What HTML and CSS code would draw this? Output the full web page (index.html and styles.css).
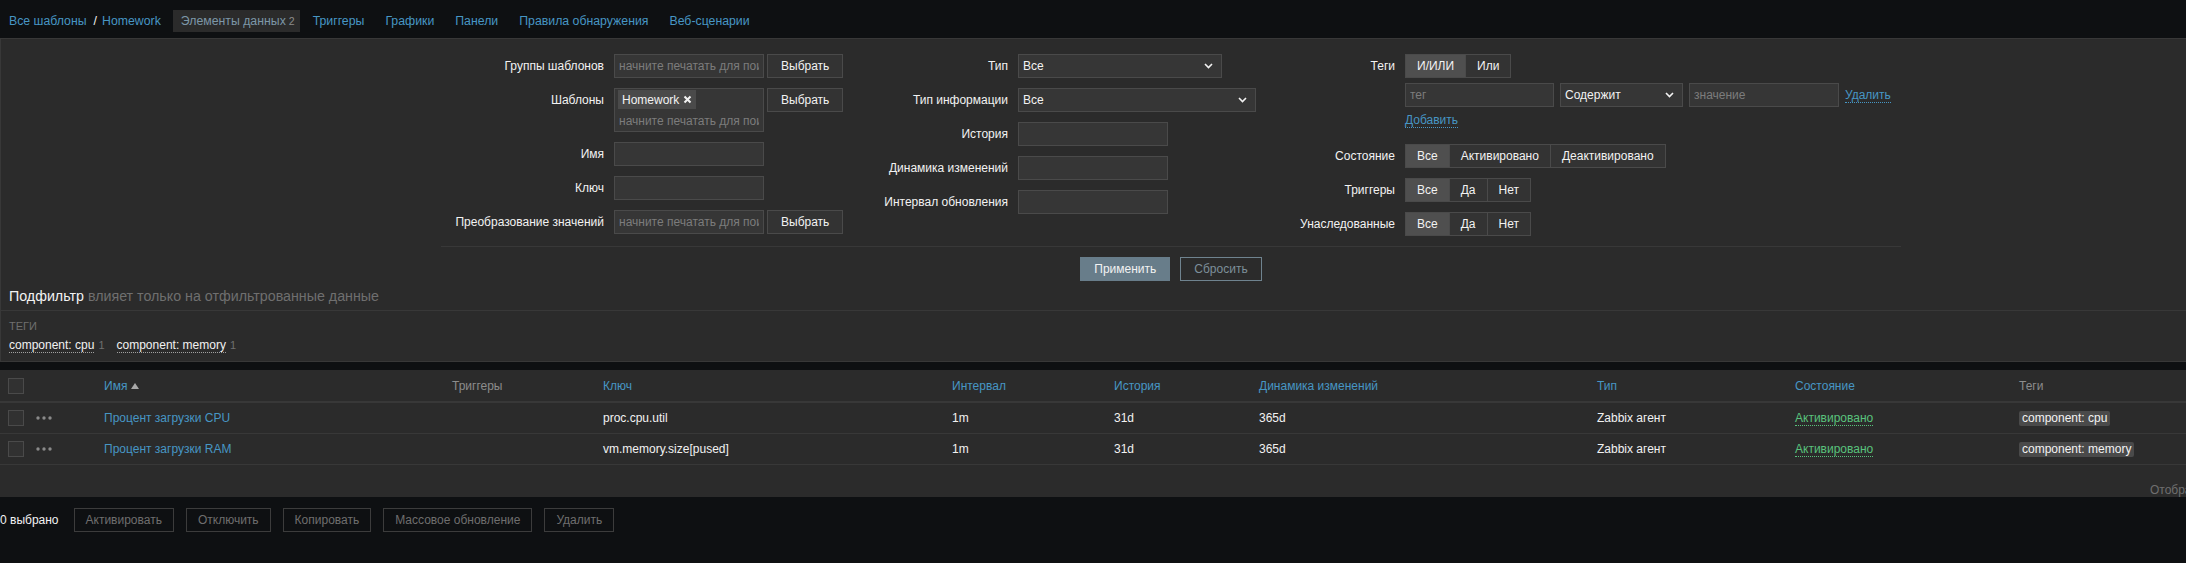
FILE: index.html
```html
<!DOCTYPE html>
<html lang="ru">
<head>
<meta charset="utf-8">
<title>Элементы данных</title>
<link rel="stylesheet" href="styles.css">
</head>
<body>
<div class="page">
  <nav class="topnav">
    <div class="crumbs"><a class="link">Все шаблоны</a><span class="sep">/</span><a class="link">Homework</a></div>
    <ul class="tabs">
      <li class="tab active">Элементы данных<span class="count">2</span></li>
      <li class="tab"><a class="link">Триггеры</a></li>
      <li class="tab"><a class="link">Графики</a></li>
      <li class="tab"><a class="link">Панели</a></li>
      <li class="tab"><a class="link">Правила обнаружения</a></li>
      <li class="tab"><a class="link">Веб-сценарии</a></li>
    </ul>
  </nav>

  <section class="filter">
    <form class="filter-form">
      <div class="filter-cols">
        <div class="fcol fcol-1">
          <label class="flabel">Группы шаблонов</label>
          <div class="with-btn"><input class="input" placeholder="начните печатать для поиска"><button type="button" class="btn grey">Выбрать</button></div>

          <label class="flabel">Шаблоны</label>
          <div class="with-btn">
            <div class="multiselect">
              <span class="chip">Homework<svg class="chip-x" width="9" height="9" viewBox="0 0 9 9"><path d="M1.5 1.5 L7.5 7.5 M7.5 1.5 L1.5 7.5" stroke="#f2f2f2" stroke-width="2"/></svg></span>
              <input class="ms-input" placeholder="начните печатать для поиска">
            </div>
            <button type="button" class="btn grey">Выбрать</button>
          </div>

          <label class="flabel">Имя</label>
          <div><input class="input"></div>

          <label class="flabel">Ключ</label>
          <div><input class="input"></div>

          <label class="flabel">Преобразование значений</label>
          <div class="with-btn"><input class="input" placeholder="начните печатать для поиска"><button type="button" class="btn grey">Выбрать</button></div>
        </div>

        <div class="fcol fcol-2">
          <label class="flabel">Тип</label>
          <div><div class="select w204"><span>Все</span><svg class="chev" width="9" height="6" viewBox="0 0 9 6"><path d="M1 1 L4.5 4.5 L8 1" fill="none" stroke="#f2f2f2" stroke-width="1.6"/></svg></div></div>

          <label class="flabel">Тип информации</label>
          <div><div class="select w238"><span>Все</span><svg class="chev" width="9" height="6" viewBox="0 0 9 6"><path d="M1 1 L4.5 4.5 L8 1" fill="none" stroke="#f2f2f2" stroke-width="1.6"/></svg></div></div>

          <label class="flabel">История</label>
          <div><input class="input"></div>

          <label class="flabel">Динамика изменений</label>
          <div><input class="input"></div>

          <label class="flabel">Интервал обновления</label>
          <div><input class="input"></div>
        </div>

        <div class="fcol fcol-3">
          <label class="flabel">Теги</label>
          <div class="tags-field">
            <div class="radio">
              <span class="seg on">И/ИЛИ</span><span class="seg">Или</span>
            </div>
            <div class="tag-row">
              <input class="input w149" placeholder="тег">
              <div class="select w123"><span>Содержит</span><svg class="chev" width="9" height="6" viewBox="0 0 9 6"><path d="M1 1 L4.5 4.5 L8 1" fill="none" stroke="#f2f2f2" stroke-width="1.6"/></svg></div>
              <input class="input" placeholder="значение">
              <a class="link dotted">Удалить</a>
            </div>
            <div class="add-row"><a class="link dotted">Добавить</a></div>
          </div>

          <label class="flabel">Состояние</label>
          <div class="radio">
            <span class="seg on">Все</span><span class="seg">Активировано</span><span class="seg">Деактивировано</span>
          </div>

          <label class="flabel">Триггеры</label>
          <div class="radio">
            <span class="seg on">Все</span><span class="seg">Да</span><span class="seg">Нет</span>
          </div>

          <label class="flabel">Унаследованные</label>
          <div class="radio">
            <span class="seg on">Все</span><span class="seg">Да</span><span class="seg">Нет</span>
          </div>
        </div>
      </div>
      <div class="filter-buttons">
        <button type="button" class="btn primary">Применить</button>
        <button type="button" class="btn outline">Сбросить</button>
      </div>
    </form>

    <div class="subfilter">
      <div class="subfilter-head"><span class="sf-title">Подфильтр</span> <span class="sf-hint">влияет только на отфильтрованные данные</span></div>
      <div class="subfilter-body">
        <div class="sf-group">ТЕГИ</div>
        <div class="sf-tags">
          <span class="sf-tag"><a class="sf-link">component: cpu</a><sup class="sf-count">1</sup></span>
          <span class="sf-tag"><a class="sf-link">component: memory</a><sup class="sf-count">1</sup></span>
        </div>
      </div>
    </div>
  </section>

  <table class="list">
    <colgroup>
      <col class="c-check"><col class="c-act"><col class="c-name"><col class="c-trig"><col class="c-key"><col class="c-int"><col class="c-hist"><col class="c-trend"><col class="c-type"><col class="c-status"><col class="c-tags">
    </colgroup>
    <thead>
      <tr>
        <th><span class="checkbox"></span></th>
        <th></th>
        <th><a class="link">Имя</a><span class="arrow-up"></span></th>
        <th class="muted">Триггеры</th>
        <th><a class="link">Ключ</a></th>
        <th><a class="link">Интервал</a></th>
        <th><a class="link">История</a></th>
        <th><a class="link">Динамика изменений</a></th>
        <th><a class="link">Тип</a></th>
        <th><a class="link">Состояние</a></th>
        <th class="muted">Теги</th>
      </tr>
    </thead>
    <tbody>
      <tr>
        <td><span class="checkbox"></span></td>
        <td><svg class="dots" width="16" height="4" viewBox="0 0 16 4"><circle cx="2" cy="2" r="1.7" fill="#8a8a8a"/><circle cx="8" cy="2" r="1.7" fill="#8a8a8a"/><circle cx="14" cy="2" r="1.7" fill="#8a8a8a"/></svg></td>
        <td><a class="link">Процент загрузки CPU</a></td>
        <td></td>
        <td>proc.cpu.util</td>
        <td>1m</td>
        <td>31d</td>
        <td>365d</td>
        <td>Zabbix агент</td>
        <td><a class="green">Активировано</a></td>
        <td><span class="tag">component: cpu</span></td>
      </tr>
      <tr>
        <td><span class="checkbox"></span></td>
        <td><svg class="dots" width="16" height="4" viewBox="0 0 16 4"><circle cx="2" cy="2" r="1.7" fill="#8a8a8a"/><circle cx="8" cy="2" r="1.7" fill="#8a8a8a"/><circle cx="14" cy="2" r="1.7" fill="#8a8a8a"/></svg></td>
        <td><a class="link">Процент загрузки RAM</a></td>
        <td></td>
        <td>vm.memory.size[pused]</td>
        <td>1m</td>
        <td>31d</td>
        <td>365d</td>
        <td>Zabbix агент</td>
        <td><a class="green">Активировано</a></td>
        <td><span class="tag">component: memory</span></td>
      </tr>
    </tbody>
    <tfoot>
      <tr><td colspan="11" class="paging">Отображено 2 из 2 найденных</td></tr>
    </tfoot>
  </table>

  <div class="actions">
    <span class="selected-count">0 выбрано</span>
    <button type="button" class="btn disabled">Активировать</button>
    <button type="button" class="btn disabled">Отключить</button>
    <button type="button" class="btn disabled">Копировать</button>
    <button type="button" class="btn disabled">Массовое обновление</button>
    <button type="button" class="btn disabled">Удалить</button>
  </div>
</div>
</body>
</html>
```

FILE: styles.css
```css
html { overflow: hidden; }
body {
  margin: 0;
  background: #0e1012;
  color: #f2f2f2;
  font-family: "Liberation Sans", Arial, sans-serif;
  font-size: 12px;
}
.page { width: 2340px; }

.link { color: #4796c4; text-decoration: none; }
.dotted { border-bottom: 1px dotted #4796c4; }

/* top navigation */
.topnav {
  display: flex;
  align-items: flex-start;
  height: 38px;
  padding: 10px 0 0 9px;
  box-sizing: border-box;
  font-size: 12.3px;
}
.crumbs { display: flex; align-items: center; height: 22px; margin-right: 12px; }
.sep { margin: 0 5px 0 7px; color: #f2f2f2; }
.tabs { display: flex; gap: 5px; list-style: none; margin: 0; padding: 0; }
.tab { height: 22px; line-height: 22px; padding: 0 8px; }
.tab.active { background: #2b2b2b; color: #7d97a8; padding-right: 5px; }
.count { color: #8c8c8c; font-size: 10.5px; margin-left: 3px; }

/* filter */
.filter {
  background: #2b2b2b;
  border: 1px solid #383838;
  border-right: none;
}
.filter-form {
  width: 1460px;
  margin-left: 440px;
}
.filter-cols {
  display: flex;
  padding: 15px 0 10px;
}
.fcol {
  display: grid;
  column-gap: 10px;
  row-gap: 10px;
  align-items: start;
  align-content: start;
}
.fcol-1 { width: 430px; grid-template-columns: 163px 1fr; }
.fcol-2 { width: 400px; grid-template-columns: 137px 1fr; }
.fcol-3 { width: 630px; grid-template-columns: 124px 1fr; }
.flabel {
  text-align: right;
  line-height: 24px;
  white-space: nowrap;
}

.input {
  width: 150px;
  height: 24px;
  box-sizing: border-box;
  background: #363636;
  border: 1px solid #4a4a4a;
  color: #f2f2f2;
  font-family: inherit;
  font-size: 12px;
  padding: 0 4px;
  outline: none;
  display: block;
}
.input::placeholder, .ms-input::placeholder { color: #7c7c7c; }
.w149 { width: 149px; }
.with-btn { display: flex; gap: 3px; align-items: flex-start; }

.multiselect {
  width: 150px;
  height: 44px;
  box-sizing: border-box;
  background: #363636;
  border: 1px solid #4a4a4a;
  padding: 1px 3px 0;
}
.chip {
  display: inline-flex;
  align-items: center;
  gap: 4px;
  height: 19px;
  padding: 0 4px;
  background: #4a4a4a;
  color: #f2f2f2;
}
.chip-x { display: block; }
.ms-input {
  display: block;
  width: 100%;
  height: 20px;
  box-sizing: border-box;
  background: transparent;
  border: none;
  padding: 0 1px;
  margin-top: 2px;
  color: #f2f2f2;
  font-family: inherit;
  font-size: 12px;
  outline: none;
}

.select {
  display: flex;
  align-items: center;
  justify-content: space-between;
  height: 24px;
  box-sizing: border-box;
  background: #363636;
  border: 1px solid #4a4a4a;
  padding: 0 8px 0 4px;
}
.w204 { width: 204px; }
.w238 { width: 238px; }
.w123 { width: 123px; }

.btn {
  height: 24px;
  box-sizing: border-box;
  font-family: inherit;
  font-size: 12px;
  padding: 0 13px;
  border: 1px solid #4a4a4a;
  background: #383838;
  color: #f2f2f2;
  cursor: default;
}
.btn.grey { background: #333333; }
.btn.primary { background: #687d8a; border-color: #687d8a; color: #f2f2f2; }
.btn.outline { background: transparent; border-color: #6f838f; color: #7d8f9a; }
.btn.disabled {
  background: transparent;
  border-color: #3c3c3c;
  color: #6e6e6e;
  padding: 0 11px;
}

.radio { display: inline-flex; align-self: start; justify-self: start; border: 1px solid #4a4a4a; }
.seg {
  height: 22px;
  line-height: 22px;
  padding: 0 11px;
  background: #333333;
  border-left: 1px solid #4a4a4a;
}
.seg:first-child { border-left: none; }
.seg.on { background: #4f4f4f; }

.tags-field { display: flex; flex-direction: column; gap: 5px; padding-bottom: 6px; }
.tag-row { display: flex; align-items: center; gap: 6px; }
.add-row { line-height: 16px; }

.filter-buttons {
  display: flex;
  justify-content: center;
  gap: 10px;
  border-top: 1px solid #383838;
  padding-top: 10px;
}

/* subfilter */
.subfilter-head {
  padding: 7px 8px 6px;
  line-height: 16px;
  font-size: 14.25px;
  border-bottom: 1px solid #383838;
}
.sf-hint { color: #6f6f6f; }
.subfilter-body { padding: 8px 8px 7px; }
.sf-group { font-size: 11px; line-height: 15px; color: #6f6f6f; }
.sf-tags { margin-top: 2px; line-height: 18px; display: flex; gap: 12px; }
.sf-link { color: #f2f2f2; border-bottom: 1px dotted #a0a0a0; }
.sf-count { color: #6f6f6f; font-size: 11px; vertical-align: baseline; margin-left: 4px; }

/* list table */
.list {
  margin-top: 8px;
  width: 100%;
  background: #2b2b2b;
  border-collapse: collapse;
  table-layout: fixed;
}
.c-check { width: 28px; }
.c-act { width: 68px; }
.c-name { width: 348px; }
.c-trig { width: 151px; }
.c-key { width: 349px; }
.c-int { width: 162px; }
.c-hist { width: 145px; }
.c-trend { width: 338px; }
.c-type { width: 198px; }
.c-status { width: 224px; }
.c-tags { width: 329px; }
.list th {
  height: 31px;
  text-align: left;
  font-weight: normal;
  padding: 0 8px;
  border-bottom: 2px solid #383838;
  white-space: nowrap;
}
.list th.muted { color: #8c8c8c; }
.list td {
  height: 30px;
  padding: 0 8px;
  border-bottom: 1px solid #383838;
  white-space: nowrap;
}
.list th:first-child, .list td:first-child { padding: 0 0 0 8px; }
.checkbox {
  display: block;
  width: 16px;
  height: 16px;
  box-sizing: border-box;
  background: #313131;
  border: 1px solid #4a4a4a;
}
.dots { display: block; }
.arrow-up {
  display: inline-block;
  margin-left: 4px;
  width: 0;
  height: 0;
  border-left: 4px solid transparent;
  border-right: 4px solid transparent;
  border-bottom: 6px solid #a8a8a8;
  vertical-align: 1px;
}
.green { color: #59c27c; border-bottom: 1px dotted #59c27c; }
.tag {
  display: inline-block;
  background: #4a4a4a;
  padding: 0 3px;
  line-height: 15px;
  border-radius: 2px;
}
.list td.paging {
  height: 32px;
  border-bottom: none;
  text-align: right;
  vertical-align: bottom;
  padding: 0 20px 0 0;
  line-height: 14px;
  color: #6f6f6f;
}

/* bottom actions */
.actions {
  display: flex;
  align-items: center;
  gap: 12px;
  margin-top: 11px;
}
.selected-count { margin-right: 3px; }
```
